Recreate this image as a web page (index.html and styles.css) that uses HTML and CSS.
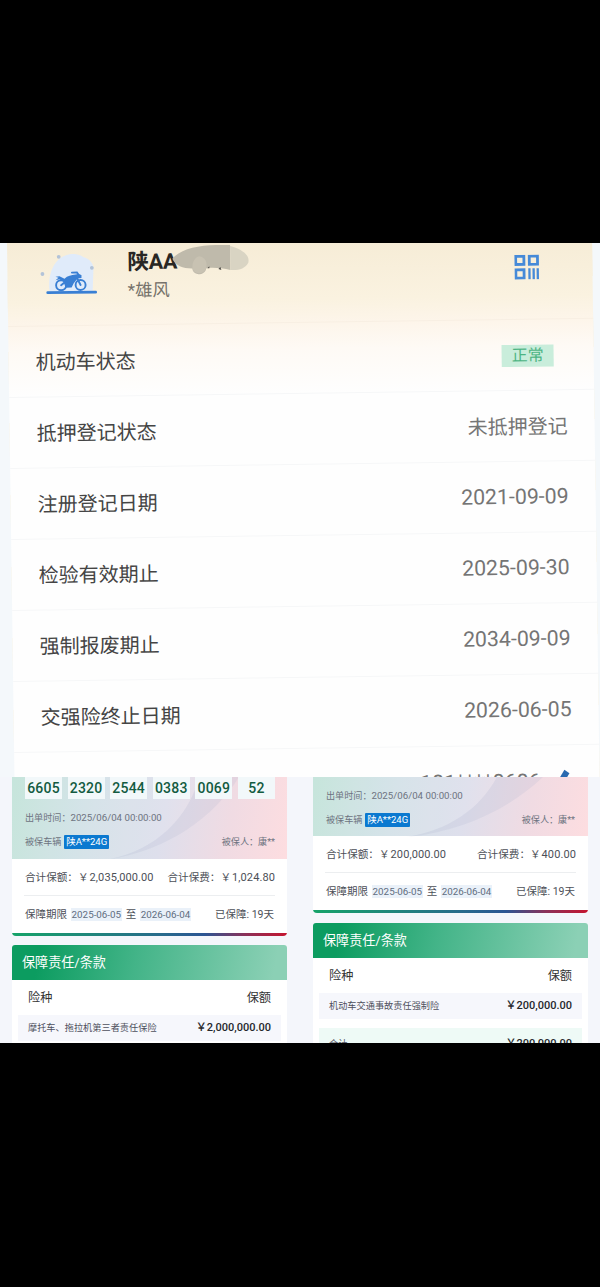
FILE: index.html
```html
<!DOCTYPE html>
<html lang="zh-CN">
<head>
    <meta charset="UTF-8">
    <meta name="viewport" content="width=device-width, initial-scale=1.0">
    <title>车辆保险信息</title>
    <link rel="stylesheet" href="styles.css">
</head>
<body>
    <section class="vehicle">
        <div class="vehicle-card">
            <header class="vehicle-head">
                <svg class="moto" width="58" height="46" viewBox="0 0 58 46">
                    <path d="M10 39C8 25 13 3 33 2c4 0 8 1 11 3 6 2 11 6 10 14l-1 20z" fill="#e0ebfa"/>
                    <g fill="#b3c3d8">
                        <circle cx="19.500" cy="4.500" r="1.900"/>
                        <circle cx="52.500" cy="16" r="1.900"/>
                        <circle cx="3" cy="21.500" r="1.900"/>
                    </g>
                    <g fill="none" stroke="#397fd4" stroke-width="1.900" stroke-linecap="round">
                        <circle cx="21.500" cy="33" r="5"/>
                        <circle cx="41" cy="33" r="5"/>
                        <path d="M32.500 20.500h5l2.500 3.500M36.500 24l4.500 9M21.500 33l5-4"/>
                    </g>
                    <path d="M16 24.500l4-.5 5 2.500c3-3 7-3.500 11-4l3-.5 3 1v3l-4 .5-4 5-2 4h-6l-2-6-4-2.500-4 1 3-2.500z" fill="#397fd4"/>
                    <path d="M8 40.200l48 .2" stroke="#397fd4" stroke-width="2.700" stroke-linecap="round"/>
                </svg>
                <div class="owner">
                    <div class="plate">陕AA</div>
                    <div class="name">*雄风</div>
                    <svg class="smudge" width="78" height="32" viewBox="0 0 78 32">
                        <path d="M0 14C8 5 25 1 44 1h14v25c-8-2-18-3-24-2-1 4-4 6-8 6-4-1-6-3-6-6-9 0-17-3-20-10z" fill="#bfbaab"/>
                        <path d="M58 2c11 3 20 9 18 17-3 6-11 8-18 7z" fill="#d9d4c3"/>
                        <path d="M27 12c6 1 8 6 7 11-1 4-4 6-8 6-4-1-6-3-6-6 0-6 3-10 7-11z" fill="#c8c2b2"/>
                        <path d="M35 24l2-2v2zM46 25l2-2 1 3z" fill="#4c4a45"/>
                    </svg>
                </div>
                <svg class="qr" width="25" height="25" viewBox="0 0 25 25">
                    <g fill="none" stroke="#468ad8" stroke-width="2.800">
                        <path d="M1.400 1.400h8.200v8.200H1.400zM15 1.400h8.200v8.200H15zM1.400 15h8.200v8.200H1.400z"/>
                        <path d="M15 13.600v11M19.200 13.600v11M23.300 13.600v11" stroke-width="2.300"/>
                    </g>
                </svg>
            </header>
            <div class="row"><span>机动车状态</span><b class="status">正常</b></div>
            <div class="row"><span>抵押登记状态</span><em>未抵押登记</em></div>
            <div class="row"><span>注册登记日期</span><em class="date">2021-09-09</em></div>
            <div class="row"><span>检验有效期止</span><em class="date">2025-09-30</em></div>
            <div class="row"><span>强制报废期止</span><em class="date">2034-09-09</em></div>
            <div class="row"><span>交强险终止日期</span><em class="date">2026-06-05</em></div>
            <div class="row phone">
                <em class="date">181****8686</em>
                <svg width="16" height="20" viewBox="0 0 16 20"><path d="M8 1.500l5 3.500-8 13-5 2 1-7z" fill="#2a6ab0"/></svg>
            </div>
        </div>
    </section>

    <section class="policies">
        <div class="policy">
            <div class="summary">
                <div class="hero">
                    <svg class="wave" width="275" height="82" viewBox="0 0 275 82">
                        <path d="M187 0h40C203 39 155 74 98 82c46-9 79-42 89-82z" fill="#aab2cf" opacity=".18"/>
                        <path d="M0 0h187C177 40 144 73 98 82H0z" fill="#fff" opacity=".08"/>
                    </svg>
                    <div class="codes">
                        <span>6605</span><span>2320</span><span>2544</span><span>0383</span><span>0069</span><span>52</span>
                    </div>
                    <div class="line issued">出单时间：<i>2025/06/04 00:00:00</i></div>
                    <div class="line"><span>被保车辆 <b class="tag">陕A**24G</b></span><span>被保人：康**</span></div>
                </div>
                <div class="totals"><span>合计保额：￥<i>2,035,000.00</i></span><span>合计保费：￥<i>1,024.80</i></span></div>
                <div class="period"><span>保障期限 <i>2025-06-05</i> 至 <i>2026-06-04</i></span><span>已保障: 19天</span></div>
            </div>
            <div class="terms">
                <h2>保障责任/条款</h2>
                <div class="thead"><span>险种</span><span>保额</span></div>
                <div class="item"><span>摩托车、拖拉机第三者责任保险</span><b>￥2,000,000.00</b></div>
            </div>
        </div>

        <div class="policy policy-right">
            <div class="summary">
                <div class="hero">
                    <svg class="wave" width="275" height="60" viewBox="0 0 275 60">
                        <path d="M184 0h46C197 31 151 54 94 60c41-7 72-27 90-60z" fill="#aab2cf" opacity=".18"/>
                        <path d="M0 0h184C166 33 135 53 94 60H0z" fill="#fff" opacity=".08"/>
                    </svg>
                    <div class="line issued">出单时间：<i>2025/06/04 00:00:00</i></div>
                    <div class="line"><span>被保车辆 <b class="tag">陕A**24G</b></span><span>被保人：康**</span></div>
                </div>
                <div class="totals"><span>合计保额：￥<i>200,000.00</i></span><span>合计保费：￥<i>400.00</i></span></div>
                <div class="period"><span>保障期限 <i>2025-06-05</i> 至 <i>2026-06-04</i></span><span>已保障: 19天</span></div>
            </div>
            <div class="terms">
                <h2>保障责任/条款</h2>
                <div class="thead"><span>险种</span><span>保额</span></div>
                <div class="item"><span>机动车交通事故责任强制险</span><b>￥200,000.00</b></div>
                <div class="item sum"><span>合计</span><b>￥200,000.00</b></div>
            </div>
        </div>
    </section>
</body>
</html>
```
FILE: styles.css
```css
* {
    box-sizing: border-box;
}
body {
    margin: 0;
    padding-top: 243px;
    height: 1287px;
    overflow: hidden;
    background: #000;
    font-family: Roboto, "Noto Sans CJK SC", sans-serif;
    white-space: nowrap;
}
em, i {
    font-style: normal;
}

/* vehicle card, slightly tilted */
.vehicle {
    height: 534px;
    overflow: hidden;
    background: #f4f8fb;
}
.vehicle-card {
    width: 585px;
    height: 560px;
    margin-left: 7px;
    transform: rotate(-0.8deg);
    transform-origin: 0 0;
    background: linear-gradient(#f6ecd6 0, #faf2e0 60px, #fdf5ea 84px, #fefaf5 110px, #fefefe 155px);
    box-shadow: 0 -10px 0 #f6ecd6;
}
.vehicle-head {
    height: 84.2px;
    display: flex;
    padding: 11px 53px 0 31.5px;
    border-bottom: 1px solid #f8efe3;
}
.moto {
    margin-top: -1px;
}
.owner {
    position: relative;
    margin-left: 30.5px;
    flex: 1;
}
.plate {
    margin-top: -3px;
    font-size: 21.5px;
    line-height: 26px;
    font-weight: 700;
    letter-spacing: -.2px;
    color: #292724;
}
.name {
    margin-top: 2px;
    font-size: 17.3px;
    line-height: 26px;
    color: #75716a;
}
.smudge {
    position: absolute;
    left: 45px;
    top: -7px;
}
.qr {
    margin-top: 8px;
}
.row {
    height: 70.9px;
    display: flex;
    align-items: center;
    justify-content: space-between;
    padding: 0 27px 0 27px;
    border-bottom: 1px solid #f6f7f8;
    font-size: 20px;
    color: #444;
}
.row span, .row em {
    margin-top: -1px;
}
.row em {
    color: #757575;
}
.row .date {
    margin-top: 0;
    font-size: 21.3px;
}
.status {
    width: 52px;
    height: 22px;
    margin: 2px 13px 0 0;
    background: #c9eddb;
    color: #4db483;
    font-size: 16px;
    font-weight: 400;
    line-height: 22px;
    text-align: center;
}
.phone {
    justify-content: flex-end;
    align-items: flex-start;
    padding-top: 23px;
    gap: 16px;
}

/* insurance policies */
.policies {
    height: 266px;
    overflow: hidden;
    display: flex;
    background: #f4f6fb;
}
.policy {
    width: 300px;
    padding: 0 13px 0 12px;
}
.policy-right {
    padding: 0 12px 0 13px;
}
.summary {
    position: relative;
    height: 159px;
    background: #fff;
    border-radius: 0 0 4px 4px;
    overflow: hidden;
}
.policy-right .summary {
    height: 136px;
}
.summary::after {
    content: "";
    position: absolute;
    left: 0;
    right: 0;
    bottom: 0;
    height: 3px;
    background: linear-gradient(90deg, #16a369, #286a8c 55%, #2b5593 70%, #8c3058 85%, #c5152f);
}
.hero {
    position: relative;
    height: 82px;
    padding: 0 12px 0 13px;
    background: linear-gradient(100deg, #c2e3d9 0, #d3e1e8 30%, #dedfec 55%, #f0dbe3 78%, #fddde0 100%);
}
.policy-right .hero {
    height: 59px;
    padding: 8px 13px 0;
}
.wave {
    position: absolute;
    left: 0;
    top: 0;
}
.codes {
    position: relative;
    display: flex;
    justify-content: space-between;
    height: 22px;
    margin-bottom: 8px;
}
.codes span {
    width: 37px;
    background: #f2f8fa;
    font-size: 14px;
    font-weight: 500;
    letter-spacing: .2px;
    line-height: 23px;
    text-align: center;
    color: #135b41;
}
.line {
    position: relative;
    height: 22px;
    display: flex;
    justify-content: space-between;
    font-size: 9.1px;
    line-height: 26px;
    color: #6d7380;
}
.issued {
    justify-content: flex-start;
    line-height: 22px;
}
.issued i {
    font-size: 9.7px;
}
.tag {
    display: inline-block;
    height: 14px;
    padding: 0 2px;
    margin-left: .5px;
    border-radius: 1px;
    background: #0b79d0;
    color: #fff;
    font-size: 9.5px;
    font-weight: 400;
    line-height: 14px;
}
.totals {
    display: flex;
    justify-content: space-between;
    height: 37px;
    margin: 0 12px;
    padding: 0 0 0 1px;
    border-bottom: 1px solid #eceef0;
    font-size: 10.6px;
    line-height: 37px;
    color: #4c4f57;
}
.totals i {
    margin-left: 1px;
    font-size: 11px;
    letter-spacing: .1px;
}
.period {
    display: flex;
    justify-content: space-between;
    padding: 0 13px;
    font-size: 10.5px;
    line-height: 37px;
    color: #4c4f57;
}
.period i {
    padding: 1px;
    margin: 0 1px;
    background: #eaf1f9;
    color: #5f6d80;
    font-size: 9.8px;
}
.terms {
    height: 120px;
    margin-top: 9px;
    background: #fff;
    border-radius: 3px 3px 0 0;
    overflow: hidden;
}
.policy-right .terms {
    margin-top: 10px;
}
.terms h2 {
    height: 35px;
    margin: 0;
    padding-left: 10px;
    background: linear-gradient(100deg, #0c9c60 10%, #43b488 45%, #8bd0b5 95%);
    color: #fff;
    font-size: 13.1px;
    font-weight: 400;
    line-height: 35px;
}
.thead {
    display: flex;
    justify-content: space-between;
    height: 35px;
    padding: 0 16px;
    font-size: 12.2px;
    line-height: 36px;
    color: #333;
}
.item {
    display: flex;
    justify-content: space-between;
    height: 26px;
    margin: 0 6px 9px;
    padding: 0 10px;
    background: #f6f7fc;
    font-size: 9.2px;
    line-height: 26px;
    color: #4e505c;
}
.item b {
    font-size: 11px;
    font-weight: 500;
    color: #25272c;
}
.sum {
    background: #eefaf6;
    line-height: 32px;
}
```
